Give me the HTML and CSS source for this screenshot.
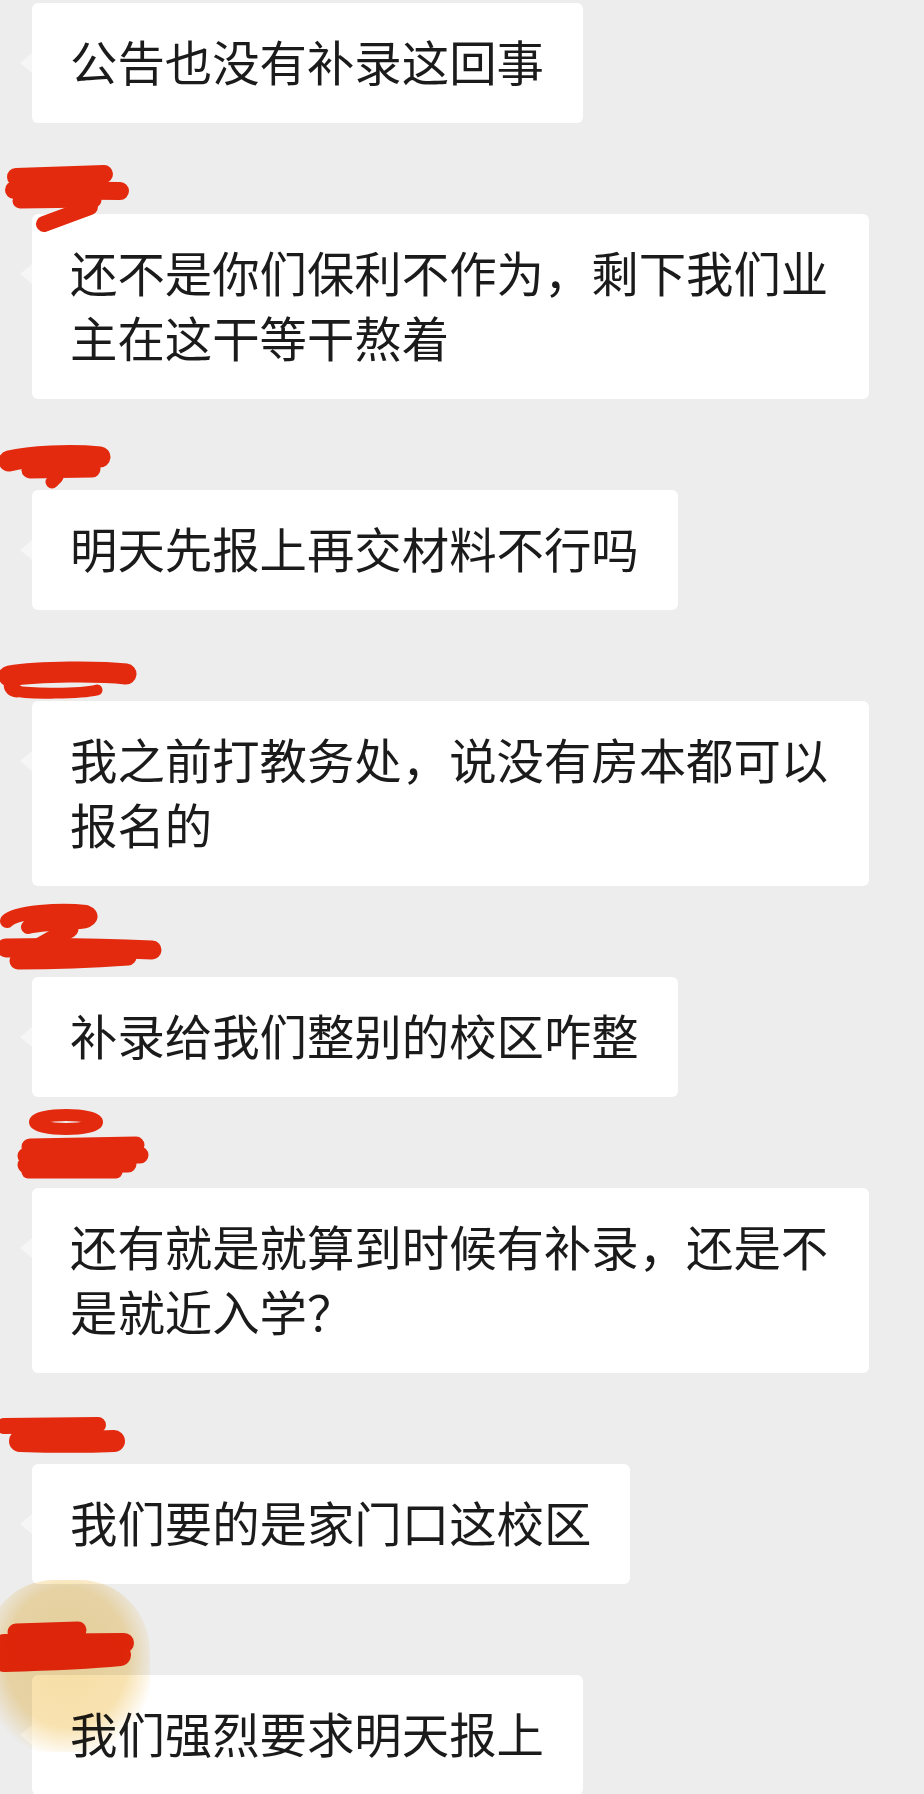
FILE: index.html
```html
<!DOCTYPE html>
<html lang="zh-CN">
<head>
<meta charset="utf-8">
<title>聊天记录</title>
<link rel="stylesheet" href="styles.css">
</head>
<body>
<div class="chat">
  <div class="msg msg-first">
    <div class="bubble">公告也没有补录这回事</div>
  </div>

  <div class="msg">
    <div class="name">
      <svg class="scribble" viewBox="0 0 170 91" width="170" height="91">
        <path d="M16,54 L104,51" stroke-width="18"/>
        <path d="M14,67 L120,68" stroke-width="18"/>
        <path d="M20,78 L94,77" stroke-width="15"/>
        <path d="M90,84 L44,101" stroke-width="16"/>
      </svg>
    </div>
    <div class="bubble">还不是你们保利不作为，剩下我们业主在这干等干熬着</div>
  </div>

  <div class="msg">
    <div class="name">
      <svg class="scribble" viewBox="0 0 170 91" width="170" height="91">
        <path d="M9,62 C30,57 70,55 100,58" stroke-width="21"/>
        <path d="M30,71 L92,70" stroke-width="17"/>
        <path d="M57,78 L52,83" stroke-width="13"/>
      </svg>
    </div>
    <div class="bubble">明天先报上再交材料不行吗</div>
  </div>

  <div class="msg">
    <div class="name">
      <svg class="scribble" viewBox="0 0 170 91" width="170" height="91">
        <path d="M9,66 C40,61 100,61 126,64" stroke-width="21"/>
        <path d="M11,71 Q8,80 17,81" stroke-width="13"/>
        <path d="M16,81 C30,84 80,84 97,80" stroke-width="11"/>
      </svg>
    </div>
    <div class="bubble">我之前打教务处，说没有房本都可以报名的</div>
  </div>

  <div class="msg">
    <div class="name">
      <svg class="scribble" viewBox="0 0 170 91" width="170" height="91">
        <path d="M7,35 C15,26 60,23 86,26 C94,29 91,35 80,36 C60,37 40,38 28,41" stroke-width="14"/>
        <path d="M70,43 L40,60" stroke-width="17"/>
        <path d="M6,62 C50,61 110,62 152,64" stroke-width="19"/>
        <path d="M18,75 C50,75 100,73 128,71" stroke-width="17"/>
      </svg>
    </div>
    <div class="bubble">补录给我们整别的校区咋整</div>
  </div>

  <div class="msg">
    <div class="name">
      <svg class="scribble" viewBox="0 0 170 91" width="170" height="91">
        <ellipse cx="66" cy="25" rx="31" ry="7" fill="none" stroke-width="12"/>
        <path d="M30,50 L136,48" stroke-width="17"/>
        <path d="M26,59 L140,58" stroke-width="17"/>
        <path d="M26,68 L128,67" stroke-width="17"/>
        <path d="M28,75 L116,75" stroke-width="13"/>
      </svg>
    </div>
    <div class="bubble">还有就是就算到时候有补录，还是不是就近入学？</div>
  </div>

  <div class="msg">
    <div class="name">
      <svg class="scribble" viewBox="0 0 170 91" width="170" height="91">
        <path d="M4,53 L98,52" stroke-width="16"/>
        <path d="M20,68 C50,69 90,69 114,68" stroke-width="22"/>
        <path d="M40,58 L80,62" stroke-width="16"/>
      </svg>
    </div>
    <div class="bubble">我们要的是家门口这校区</div>
  </div>

  <div class="msg">
    <div class="name">
      <svg class="scribble" viewBox="0 0 170 91" width="170" height="91">
        <path d="M16,48 L78,46" stroke-width="17"/>
        <path d="M4,60 L124,59" stroke-width="20"/>
        <path d="M4,77 C40,76 90,74 120,71" stroke-width="22"/>
      </svg>
    </div>
    <div class="bubble">我们强烈要求明天报上</div>
  </div>
</div>
<div class="highlight"></div>
</body>
</html>
```

FILE: styles.css
```css
html, body {
  margin: 0;
  padding: 0;
  background: #ededed;
}

body {
  width: 924px;
  height: 1794px;
  overflow: hidden;
  position: relative;
  font-family: "Noto Sans CJK SC", "Noto Sans", sans-serif;
}

.chat {
  display: flex;
  flex-direction: column;
  padding: 3px 0 0 32px;
}

.msg {
  display: flex;
  flex-direction: column;
  align-items: flex-start;
}

.name {
  position: relative;
  z-index: 2;
  height: 91px;
  margin-left: -32px;
}

.scribble {
  display: block;
  overflow: visible;
  fill: none;
  stroke: #e42a0e;
  stroke-linecap: round;
  stroke-linejoin: round;
}

.bubble {
  position: relative;
  box-sizing: border-box;
  max-width: 837px;
  padding: 25px 39px 30px 38px;
  background: #ffffff;
  border-radius: 6px;
  color: #1b1b1b;
  font-size: 47.4px;
  line-height: 65px;
  font-weight: 400;
}

.bubble::before {
  content: "";
  position: absolute;
  left: -12px;
  top: 50px;
  border-style: solid;
  border-width: 10px 12px 10px 0;
  border-color: transparent #f6f6f6 transparent transparent;
}

.highlight {
  position: absolute;
  left: -16px;
  top: 1580px;
  width: 166px;
  height: 172px;
  border-radius: 42% 42% 40% 40%;
  background: radial-gradient(ellipse at 50% 45%, rgba(240, 194, 90, 0.55) 0%, rgba(240, 194, 90, 0.48) 52%, rgba(240, 194, 90, 0) 76%);
  mix-blend-mode: multiply;
  pointer-events: none;
  z-index: 3;
}
```
